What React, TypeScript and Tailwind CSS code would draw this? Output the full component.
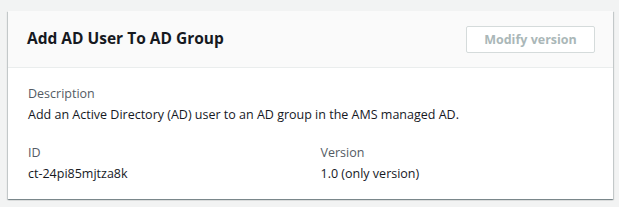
import React from "react";

const font = { fontFamily: '"Open Sans", "Liberation Sans", Arial, sans-serif' };

function Field({ label, value }: { label: string; value: string }) {
  return (
    <div>
      <div className="text-[12.5px] leading-[20px] text-[#545b64]">{label}</div>
      <div className="text-[12.5px] leading-[21px] text-[#16191f]">{value}</div>
    </div>
  );
}

export default function App() {
  return (
    <div className="min-h-[207px] w-full bg-[#f2f3f3] pt-[11px] pl-[8px] pr-[6px]" style={font}>
      <div className="bg-white shadow-[0_1px_1px_0_rgba(0,28,36,0.3),1px_1px_1px_0_rgba(0,28,36,0.15),-1px_1px_1px_0_rgba(0,28,36,0.15)]">
        <div className="flex h-[57px] items-center justify-between border-b border-[#eaeded] bg-[#fafafa] pl-[19px] pr-[18px]">
          <h2 className="pb-[3px] text-[15.5px] font-bold leading-[24px] text-[#16191f]">Add AD User To AD Group</h2>
          <button
            disabled
            className="h-[27px] w-[129px] rounded-[2px] border border-[#d5dbdb] bg-white pt-[2px] text-[12.5px] font-bold text-[#aab7b8]"
          >
            Modify version
          </button>
        </div>
        <div className="px-[20px] pt-[16px] pb-[15px]">
          <Field
            label="Description"
            value="Add an Active Directory (AD) user to an AD group in the AMS managed AD."
          />
          <div className="mt-[18px] grid grid-cols-2 gap-x-[20px]">
            <Field label="ID" value="ct-24pi85mjtza8k" />
            <Field label="Version" value="1.0 (only version)" />
          </div>
        </div>
      </div>
    </div>
  );
}
